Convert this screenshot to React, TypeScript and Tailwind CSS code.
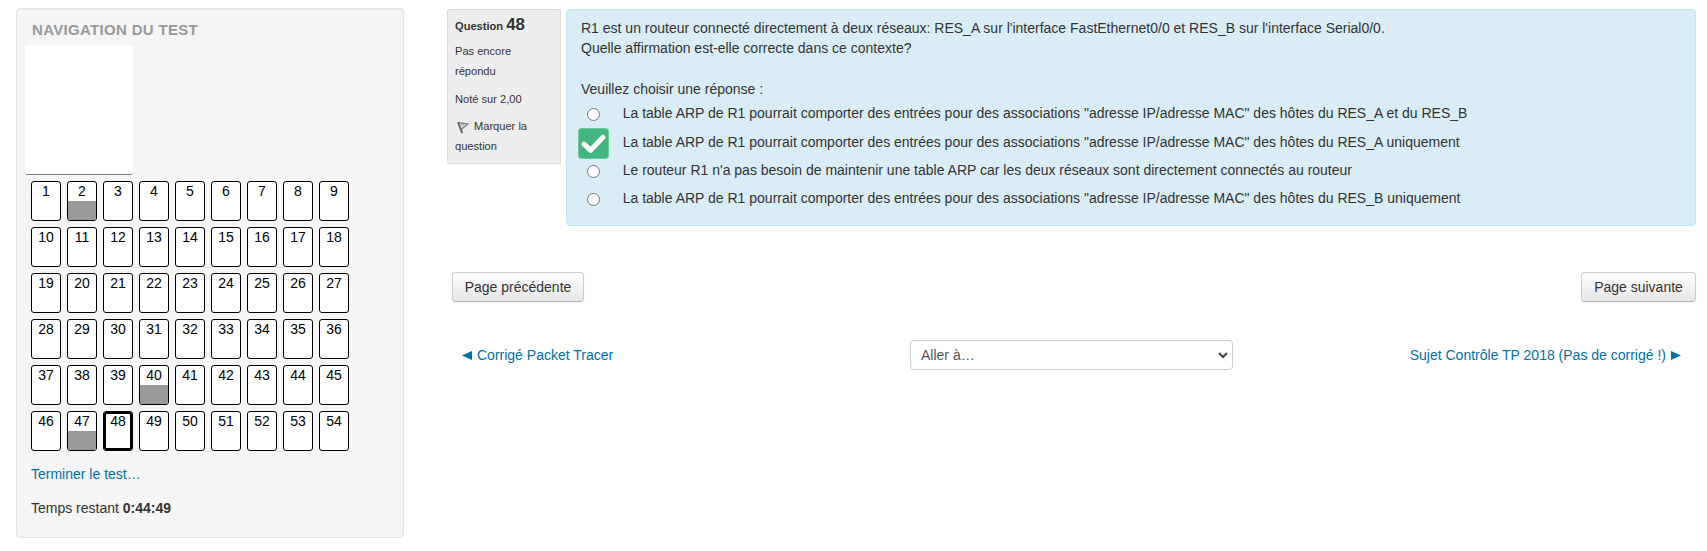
import React from "react";

const answered = [2, 40, 47];
const current = 48;

function QuizCell({ n }: { n: number }) {
  return (
    <a className="relative flex h-10 w-[30px] flex-col overflow-hidden rounded-[3px] border border-black bg-white text-center text-[14px] leading-[18px] text-black">
      <span>{n}</span>
      {answered.includes(n) && <span className="mt-px flex-1 bg-[#999999]" />}
      {n === current && <span className="absolute inset-0 rounded-[1px] border-2 border-black" />}
    </a>
  );
}

function Radio() {
  return <span className="mt-[5px] ml-[6px] block size-[13px] rounded-full border border-[#767676] bg-white" />;
}

function CheckMark() {
  return (
    <svg className="-mt-1 -ml-[3.5px] block" width="31" height="31" viewBox="0 0 31 31" fill="none">
      <rect x="0.5" y="0.5" width="30" height="30" rx="3" fill="#43b581" stroke="#6cc99c" />
      <path d="M6 16.2 L12.6 22.3 L25 9.2" stroke="white" strokeWidth="5" strokeLinecap="round" strokeLinejoin="round" />
    </svg>
  );
}

const options = [
  { text: `La table ARP de R1 pourrait comporter des entrées pour des associations "adresse IP/adresse MAC" des hôtes du RES_A et du RES_B`, row: "h-[29px]" },
  { text: `La table ARP de R1 pourrait comporter des entrées pour des associations "adresse IP/adresse MAC" des hôtes du RES_A uniquement`, row: "h-7", checked: true },
  { text: "Le routeur R1 n'a pas besoin de maintenir une table ARP car les deux réseaux sont directement connectés au routeur", row: "h-7" },
  { text: `La table ARP de R1 pourrait comporter des entrées pour des associations "adresse IP/adresse MAC" des hôtes du RES_B uniquement`, row: "h-7" },
];

const button =
  "h-[30px] rounded-[4px] border border-[#cccccc] border-b-[#b3b3b3] bg-linear-to-b from-white to-[#e6e6e6] text-center text-[14px] leading-[28px] text-[#333333] shadow-[inset_0_1px_0_rgba(255,255,255,0.2),0_1px_2px_rgba(0,0,0,0.05)]";

export default function App() {
  return (
    <div className="flex h-[551px] w-[1707px] items-start bg-white pl-4 font-['Liberation_Sans',Arial,sans-serif] text-[14px] leading-5 text-[#333333]">
      <aside className="mt-2 h-[530px] w-[388px] shrink-0 rounded-[4px] border border-[#e3e3e3] bg-[#f5f5f5] px-[14px] pt-[11px] shadow-[inset_0_1px_1px_rgba(0,0,0,0.05)]">
        <h2 className="ml-px h-[25px] text-[15px] leading-5 font-bold tracking-[0.32px] whitespace-nowrap text-[#999999]">NAVIGATION DU TEST</h2>
        <div className="-ml-[6px] h-[130px] w-[108px] rounded-[3px] border-b border-[#777777] bg-white" />
        <div className="mt-[6px] grid w-[318px] grid-cols-[repeat(9,30px)] gap-[6px]">
          {Array.from({ length: 54 }, (_, i) => (
            <QuizCell key={i} n={i + 1} />
          ))}
        </div>
        <a className="mt-[13px] block text-[#0070a8]">Terminer le test…</a>
        <p className="mt-[14px]">
          Temps restant <b>0:44:49</b>
        </p>
      </aside>

      <main className="ml-[43px] w-[1249px] shrink-0">
        <div className="mt-[9px] flex items-start">
          <section className="h-[155px] w-[114px] shrink-0 rounded-[2px] border border-[#dcdcdc] bg-[#eeeeee] pl-[7px] text-[11.1px]">
            <h3 className="mt-[5px] h-5 font-bold whitespace-nowrap">
              Question <span className="text-[16.8px]">48</span>
            </h3>
            <p className="mt-[6px]">
              Pas encore
              <br />
              répondu
            </p>
            <p className="mt-2">Noté sur 2,00</p>
            <p className="mt-[7px]">
              <svg className="mr-[5px] ml-[2px] inline-block align-[-4px]" width="12" height="13" viewBox="0 0 12 13" fill="none">
                <path d="M1 1 L5.2 12.2" stroke="#606060" strokeWidth="1.9" />
                <path d="M1.2 1.6 L11 3 L4.3 8.2" stroke="#777" strokeWidth="1.3" />
                <path d="M3.6 3.5 L7 4 L4.8 5.8" stroke="#aaa" strokeWidth="1" />
              </svg>
              Marquer la
              <br />
              question
            </p>
          </section>

          <section className="ml-[5px] h-[217px] w-[1130px] rounded-[4px] border border-[#bce8f1] bg-[#d9edf7] pt-2 pl-[14px]">
            <p>
              R1 est un routeur connecté directement à deux réseaux: RES_A sur l'interface FastEthernet0/0 et RES_B sur l'interface Serial0/0.
              <br />
              Quelle affirmation est-elle correcte dans ce contexte?
            </p>
            <p className="mt-[21px] mb-1">Veuillez choisir une réponse :</p>
            {options.map((o, i) => (
              <label key={i} className={`flex items-start ${o.row}`}>
                <span className="w-[41.7px] shrink-0">{o.checked ? <CheckMark /> : <Radio />}</span>
                <span className="whitespace-nowrap">{o.text}</span>
              </label>
            ))}
          </section>
        </div>

        <div className="mt-[46px] flex justify-between pl-[5px]">
          <button className={`w-[132px] ${button}`}>Page précédente</button>
          <button className={`w-[115px] ${button}`}>Page suivante</button>
        </div>

        <nav className="mt-[38px] grid h-[30px] grid-cols-[463px_323px_1fr] items-center">
          <a className="flex items-center gap-[5px] pl-[15px] text-[#0070a8]">
            <svg width="10" height="9" viewBox="0 0 10 9" fill="currentColor">
              <path d="M0 4.5 L10 0 V9 Z" />
            </svg>
            Corrigé Packet Tracer
          </a>
          <div className="flex h-[30px] items-center justify-between rounded-[4px] border border-[#cccccc] bg-white pr-1 pl-[10px] text-[#555555]">
            <span>Aller à…</span>
            <svg width="10" height="8" viewBox="0 0 10 8" fill="none">
              <path d="M1 2 L5 6 L9 2" stroke="#444" strokeWidth="2" />
            </svg>
          </div>
          <a className="flex items-center justify-end gap-[5px] pr-[15px] text-[#0070a8]">
            Sujet Contrôle TP 2018 (Pas de corrigé !)
            <svg width="10" height="9" viewBox="0 0 10 9" fill="currentColor">
              <path d="M10 4.5 L0 0 V9 Z" />
            </svg>
          </a>
        </nav>
      </main>
    </div>
  );
}
